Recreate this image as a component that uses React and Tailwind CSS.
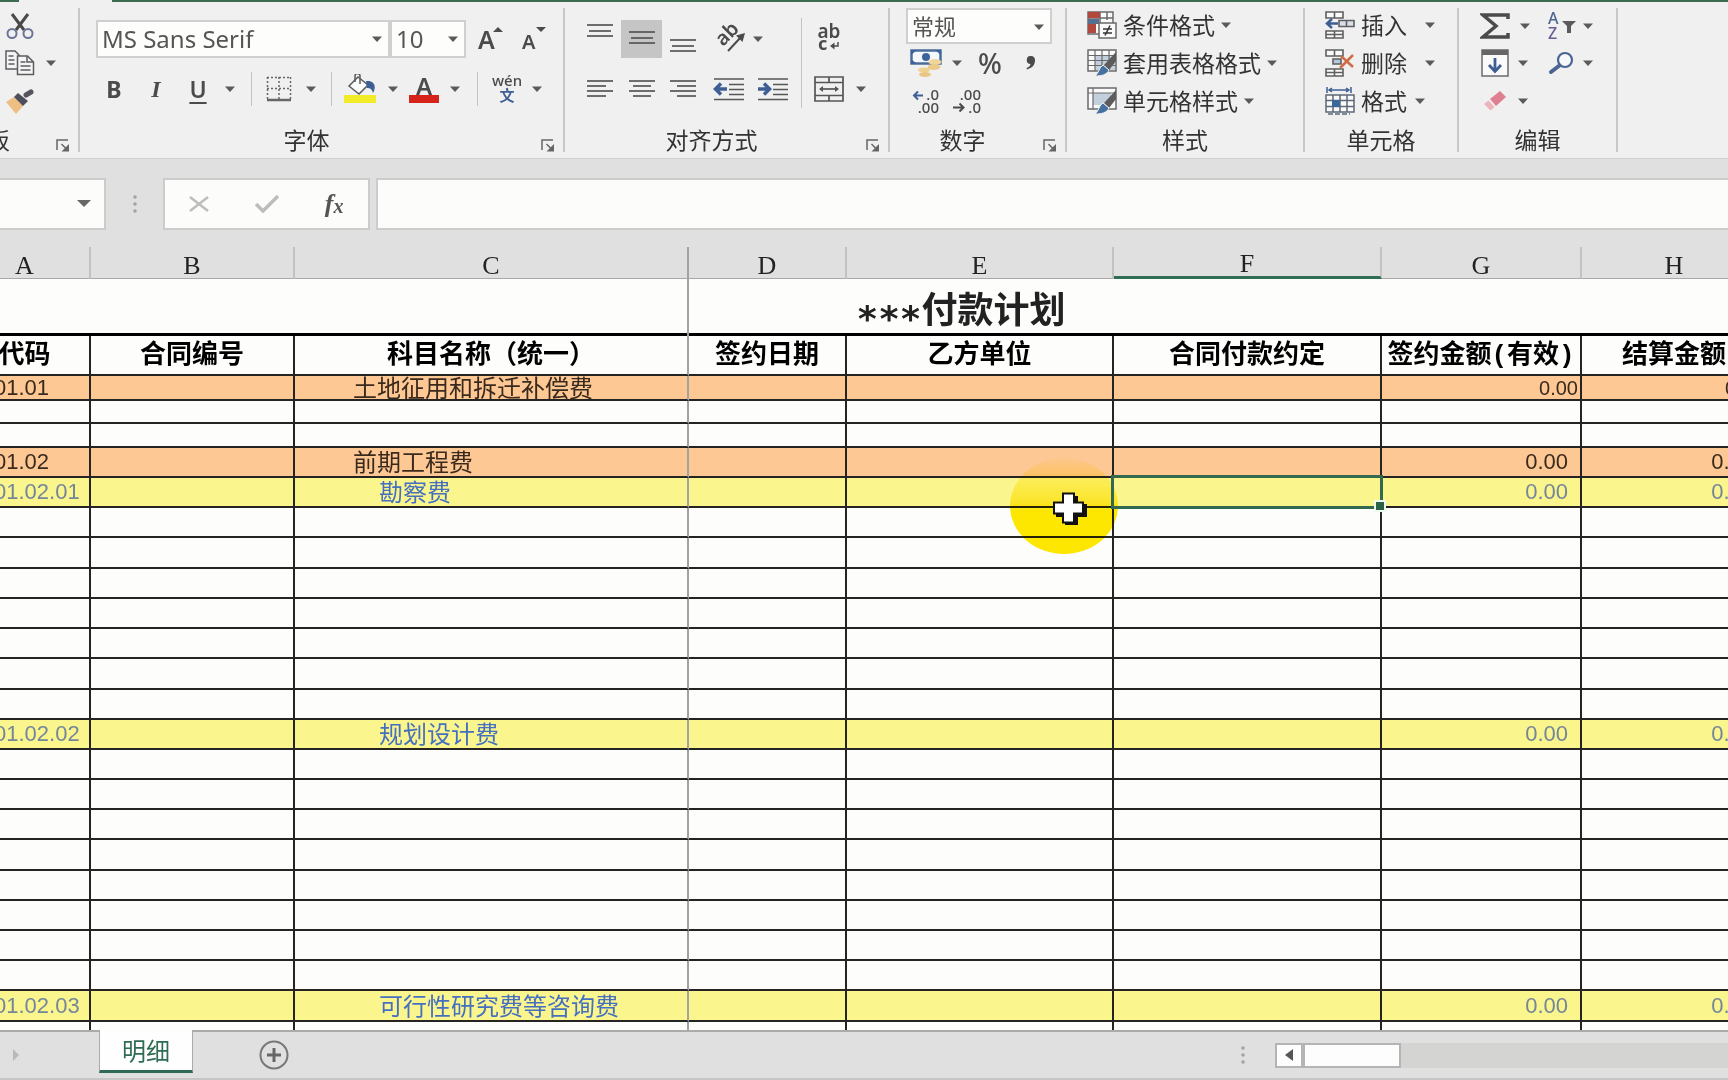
import React from "react";

const INK = "#4b4b4b";
const BLUE = "#3f5f94";

function Caret({ className = "" }) {
  return (
    <svg width="10" height="6" viewBox="0 0 10 6" className={`shrink-0 ${className}`} aria-hidden="true">
      <path d="M0 0.5h10L5 6z" fill="#5a5a5a" />
    </svg>
  );
}

function Btn({ label, className = "", children }) {
  return (
    <button type="button" aria-label={label} className={`flex h-full shrink-0 items-center justify-center ${className}`}>
      {children}
    </button>
  );
}

function Drop({ label, className = "w-[22px]" }) {
  return (
    <Btn label={label} className={className}>
      <Caret />
    </Btn>
  );
}

function Combo({ label, value, className = "" }) {
  return (
    <div className={`relative h-full shrink-0 ${className}`}>
      <select
        aria-label={label}
        defaultValue={value}
        className="h-full w-full appearance-none rounded-none border-2 border-[#cfcfcf] bg-[#fdfefc] pl-1 leading-7 text-[#555]"
      >
        <option>{value}</option>
      </select>
      <Caret className="pointer-events-none absolute top-4 right-2" />
    </div>
  );
}

function Launcher() {
  return (
    <button type="button" aria-label="更多选项" className="flex w-[30px] shrink-0 items-end justify-center">
      <svg width="14" height="13" viewBox="0 0 14 13" fill="none" stroke="#666" aria-hidden="true">
        <path d="M1 11V1h11" strokeWidth="1.5" />
        <path d="M5.500 5l5 5" strokeWidth="1.5" />
        <path d="M13 5v7.500H5.500z" fill="#666" stroke="none" />
      </svg>
    </button>
  );
}

function Group({ name, launcher, className, children }) {
  return (
    <section aria-label={name} className={`flex shrink-0 flex-col border-r-2 border-[#c8c8c8] ${className}`}>
      {children}
      <div className="mt-auto flex h-[25px]">
        <span className="flex-1 text-center text-[23px] leading-[26px] text-[#333]">{name}</span>
        {launcher && <Launcher />}
      </div>
    </section>
  );
}

const Divider = ({ className }) => (
  <div className={`flex h-full shrink-0 justify-center ${className}`}>
    <div className="w-px bg-[#c4c4c4]" />
  </div>
);

/* Horizontal strokes given as [x1, x2, y] */
function Lines({ w = 28, h = 38, rows }) {
  return (
    <svg width={w} height={h} viewBox={`0 0 ${w} ${h}`} stroke="#555" strokeWidth="1.700" aria-hidden="true">
      {rows.map(([a, b, y]) => (
        <path key={y} d={`M${a} ${y}H${b}`} />
      ))}
    </svg>
  );
}

const Scissors = () => (
  <svg width="28" height="27" viewBox="0 0 28 27" fill="none" aria-hidden="true">
    <path d="M6 1l12 16M22 1L10 17" stroke="#4a4a4a" strokeWidth="3" />
    <circle cx="6" cy="20.500" r="4.500" stroke="#6b7596" strokeWidth="2" />
    <circle cx="22" cy="20.500" r="4.500" stroke="#6b7596" strokeWidth="2" />
  </svg>
);

const Copy = () => (
  <svg width="30" height="26" viewBox="0 0 30 26" fill="#f4f4f4" stroke="#5b5b62" strokeWidth="1.500" aria-hidden="true">
    <path d="M1 1h9l4 4v14H1z" />
    <path d="M3.500 6h5M3.500 10h6M3.500 14h6" />
    <path d="M12.500 6h10l6 6v12.500h-16z" />
    <path d="M22 6v6h6M15.500 12h5M15.500 16h10M15.500 20h10" fill="none" />
  </svg>
);

const Brush = () => (
  <svg width="30" height="26" viewBox="0 0 30 26" aria-hidden="true">
    <path d="M1 14l8-5 9 9-7 8z" fill="#edbf83" />
    <path d="M9 9l4-4 10 8-5 5z" fill="#4d4d5c" />
    <path d="M21 7l5-3" stroke="#55555f" strokeWidth="5" strokeLinecap="round" />
  </svg>
);

const GrowFont = ({ down }) => (
  <svg width="26" height="28" viewBox="0 0 26 28" fill={INK} className="overflow-visible" aria-hidden="true">
    <text x="1" y="24" fontFamily="Noto Sans" fontWeight="600" fontSize={down ? 20 : 25}>A</text>
    {down ? <path d="M15 2h10l-5 5z" /> : <path d="M16 7h10l-5-5z" />}
  </svg>
);

const Borders = () => (
  <svg width="26" height="26" viewBox="0 0 26 26" fill="none" stroke="#666" aria-hidden="true">
    <path d="M1 1.500h24M1 12.500h24M1.500 1v22M13 1v22M24.500 1v22" strokeWidth="1.500" strokeDasharray="2 2" />
    <path d="M1 24h24" strokeWidth="2.500" />
  </svg>
);

const Fill = () => (
  <svg width="32" height="30" viewBox="0 0 32 30" aria-hidden="true">
    <path d="M5 12l9-9 10 8-9 9z" fill="#fbfbfb" stroke="#5b5b5b" strokeWidth="1.500" />
    <path d="M11 8V2a2.500 2.500 0 015 0v8" fill="none" stroke="#5b5b5b" strokeWidth="1.500" />
    <path d="M22 7c8-1 11 5 7 12-1-4-3-5-6-5z" fill={BLUE} />
    <rect x="0" y="21" width="32" height="8" fill="#f2ec28" />
  </svg>
);

const FontColor = () => (
  <svg width="32" height="30" viewBox="0 0 32 30" className="overflow-visible" aria-hidden="true">
    <text x="16" y="21" textAnchor="middle" fontFamily="Noto Sans" fontWeight="600" fontSize="24" fill={INK}>A</text>
    <rect x="1" y="21" width="30" height="8" fill="#d6241a" />
  </svg>
);

const Phonetic = () => (
  <svg width="32" height="30" viewBox="0 0 32 30" className="overflow-visible" aria-hidden="true">
    <text x="16" y="12" textAnchor="middle" fontFamily="Noto Sans" fontWeight="500" fontSize="15" fill={INK}>wén</text>
    <text x="16" y="27" textAnchor="middle" fontFamily="Noto Sans CJK SC" fontWeight="700" fontSize="15" fill={BLUE}>文</text>
  </svg>
);

const Orientation = () => (
  <svg width="32" height="30" viewBox="0 0 32 30" className="overflow-visible" aria-hidden="true">
    <text x="0" y="0" transform="translate(9 23) rotate(-45)" fontFamily="Noto Sans" fontWeight="600" fontSize="20" fill={INK}>ab</text>
    <path d="M14 27L27 13" stroke={INK} strokeWidth="2" />
    <path d="M31 9l-9 2.500 6.500 6.500z" fill={INK} />
  </svg>
);

const Wrap = () => (
  <svg width="26" height="30" viewBox="0 0 26 30" className="overflow-visible" aria-hidden="true">
    <text x="13" y="14" textAnchor="middle" fontFamily="Noto Sans" fontWeight="600" fontSize="19" fill={INK}>ab</text>
    <text x="2" y="26" fontFamily="Noto Sans" fontWeight="700" fontSize="18" fill={INK}>c</text>
    <path d="M22 18v4h-5" fill="none" stroke={INK} strokeWidth="1.500" />
    <path d="M14 22l4.500-3.500v7z" fill={INK} />
  </svg>
);

const Indent = ({ right }) => (
  <svg width="32" height="24" viewBox="0 0 32 24" stroke="#555" strokeWidth="1.700" aria-hidden="true">
    <path d="M1 2h30M16 7.500h15M16 12.500h15M16 17.500h15M1 22.500h30" />
    {right ? (
      <path d="M1 12h11M7 6.500l5.500 5.500L7 17.500" stroke={BLUE} strokeWidth="3.500" fill="none" />
    ) : (
      <path d="M14 12H3M8 6.500L2.500 12 8 17.500" stroke={BLUE} strokeWidth="3.500" fill="none" />
    )}
  </svg>
);

const Merge = () => (
  <svg width="30" height="26" viewBox="0 0 30 26" fill="none" stroke="#555" strokeWidth="1.700" aria-hidden="true">
    <path d="M1 1h28v24H1zM1 6.500h28M1 19.500h28M15 1v5M15 20v5" />
    <path d="M6 13h18" />
    <path d="M5 13l4-3v6zM25 13l-4-3v6z" fill="#555" stroke="none" />
  </svg>
);

const Currency = () => (
  <svg width="32" height="30" viewBox="0 0 32 30" aria-hidden="true">
    <rect x="1.500" y="2.500" width="29" height="13" fill="#f4f8fc" stroke="#4a6c9c" strokeWidth="2.500" />
    <circle cx="16" cy="9" r="4" fill="#3d639b" />
    <path d="M1 2h6L1 7zM31 2h-6l6 5zM1 16h6l-6-5z" fill="#3d639b" />
    <ellipse cx="25" cy="14" rx="6.500" ry="3" fill="#f1d69b" />
    <ellipse cx="24" cy="19" rx="6.500" ry="3" fill="#eccb8a" />
    <ellipse cx="14" cy="22" rx="6" ry="2.500" fill="#efd08e" />
    <ellipse cx="15" cy="26.500" rx="6" ry="2.500" fill="#e9c684" />
  </svg>
);

const Decimal = ({ less }) => (
  <svg width="30" height="28" viewBox="0 0 30 28" fontFamily="Noto Sans" fontSize="15" fontWeight="500" fill={INK} className="overflow-visible" aria-hidden="true">
    <text x="29" y="13" textAnchor="end">{less ? ".00" : ".0"}</text>
    <text x="29" y="26" textAnchor="end">{less ? ".0" : ".00"}</text>
    {less ? (
      <path d="M1 20.500h10M7.500 16.500l4 4-4 4" fill="none" stroke={INK} strokeWidth="2" />
    ) : (
      <path d="M13 8.500H4M8 4.500l-4 4 4 4" fill="none" stroke={BLUE} strokeWidth="2" />
    )}
  </svg>
);

const CondFormat = () => (
  <svg width="30" height="28" viewBox="0 0 30 28" fill="none" stroke="#6a6a6a" strokeWidth="1.500" aria-hidden="true">
    <path d="M1 1h25v22H1zM1 7h25M13 1v22M20 1v8" fill="#fafafa" />
    <path d="M1 1h12v6H1zM1 13h8v9H1z" fill="#b2483e" stroke="none" />
    <path d="M1 8h11v5H1z" fill="#56708f" stroke="none" />
    <rect x="12" y="12" width="17" height="15" fill="#fafafa" />
    <path d="M16 18h9M16 22h9M23 14.500l-5 10" stroke="#333" />
  </svg>
);

const TableFormat = ({ cell }) => (
  <svg width="30" height="28" viewBox="0 0 30 28" fill="none" stroke="#6a6a6a" strokeWidth="1.500" aria-hidden="true">
    <path d="M1 1h28v21H1z" fill="#fafafa" />
    <path d={cell ? "M6 6h18v12H6z" : "M8 6h20v15H8z"} fill="#c3cfdd" stroke="none" />
    <path d={cell ? "M1 6h28M6 1v21" : "M1 6.500h28M1 11.500h28M1 16.500h28M8 1v21M15 1v21M22 1v21"} strokeWidth="1.200" />
    <path d="M29 3l-12 13 5 5 7-9z" fill="#5c5c5c" stroke="none" />
    <path d="M16 16l6 5c-2 5-8 6-14 6 4-3 4-9 8-11z" fill="#44719f" stroke="#f2f2f2" strokeWidth="1" />
  </svg>
);

const Grid3 = ({ y }) => <path d={`M1 ${y}h17v6H1zM9.500 ${y}v6`} fill="#fafafa" />;

const InsertCells = () => (
  <svg width="30" height="28" viewBox="0 0 30 28" fill="none" stroke="#5f5f5f" strokeWidth="1.600" aria-hidden="true">
    <Grid3 y={1} />
    <path d="M1 20h17v7H1zM1 23.500h17M9.500 20v7" fill="#fafafa" />
    <path d="M14 9.500h15v6H14zM21.500 9.500v6" fill="#d9dfe8" />
    <path d="M13 12.500H3M7 8l-5 4.500L7 17" stroke={BLUE} strokeWidth="2.500" />
  </svg>
);

const DeleteCells = () => (
  <svg width="30" height="28" viewBox="0 0 30 28" fill="none" stroke="#5f5f5f" strokeWidth="1.600" aria-hidden="true">
    <Grid3 y={1} />
    <path d="M1 20h17v7H1zM1 23.500h17M9.500 20v7" fill="#fafafa" />
    <path d="M8 10h8v5H8z" fill="#b9c7da" />
    <path d="M16 7l12 11M28 6L15 19" stroke="#d06c45" strokeWidth="2.500" />
  </svg>
);

const FormatCells = () => (
  <svg width="30" height="28" viewBox="0 0 30 28" fill="none" stroke="#5f6878" strokeWidth="1.500" aria-hidden="true">
    <path d="M2 0v6M26 0v6M4 3h20M7 1L4 3l3 2M21 1l3 2-3 2" stroke={BLUE} />
    <path d="M1 8h28v17H1zM1 13.500h28M1 19.500h28M8 8v17M15 8v17M22 8v17" fill="#fafafa" />
    <rect x="7" y="13" width="8" height="7" fill="#3c689c" stroke="none" />
    <path d="M3 27h22" strokeDasharray="5 2" />
  </svg>
);

const Sigma = () => (
  <svg width="30" height="26" viewBox="0 0 30 26" fill="none" stroke="#4b4b4b" aria-hidden="true">
    <path d="M28 6V2H3l13 11L3 24h25v-4" strokeWidth="3.500" />
  </svg>
);

const SortFilter = () => (
  <svg width="30" height="28" viewBox="0 0 30 28" fontFamily="Noto Sans" fontSize="16" fontWeight="500" className="overflow-visible" aria-hidden="true">
    <text x="1" y="12" fill="#4e6794">A</text>
    <text x="1" y="27" fill="#6d5a95">Z</text>
    <path d="M15 9h14l-5 5v7h-4v-7z" fill="#5a5a5a" />
  </svg>
);

const FillDown = () => (
  <svg width="28" height="28" viewBox="0 0 28 28" aria-hidden="true">
    <rect x="1" y="1" width="26" height="26" fill="#fafafa" stroke="#6a6a6a" strokeWidth="1.500" />
    <rect x="1" y="1" width="26" height="5" fill="#666" />
    <path d="M14 9v13M8 16l6 6.500L20 16" fill="none" stroke={BLUE} strokeWidth="2.800" />
  </svg>
);

const Find = () => (
  <svg width="28" height="24" viewBox="0 0 28 24" fill="none" aria-hidden="true">
    <circle cx="17" cy="9" r="7" stroke="#4a6592" strokeWidth="2.200" fill="#f6f8fb" />
    <path d="M11.500 14.500L3 21" stroke="#4a6592" strokeWidth="4" strokeLinecap="round" />
  </svg>
);

const Eraser = () => (
  <svg width="26" height="22" viewBox="0 0 26 22" aria-hidden="true">
    <path d="M8 9L18 1l6 6-10 9z" fill="#df7f8f" />
    <path d="M6.500 10.500l6 6.500-4 3.500L2 14z" fill="#eeb3bb" />
  </svg>
);

const Dots = () => (
  <svg width="4" height="18" viewBox="0 0 4 18" fill="#a3a3a3" aria-hidden="true">
    <circle cx="2" cy="2" r="1.800" />
    <circle cx="2" cy="9" r="1.800" />
    <circle cx="2" cy="16" r="1.800" />
  </svg>
);

function Command({ icon, text, gap = "gap-1.5" }) {
  return (
    <button type="button" className={`flex h-[38px] items-center text-[23px] leading-none whitespace-nowrap text-[#333] ${gap}`}>
      <span className="flex items-center gap-1.5">
        {icon}
        {text}
      </span>
      <Caret />
    </button>
  );
}

function Ribbon() {
  return (
    <header className="flex h-[157px] shrink-0 overflow-hidden border-b border-[#d2d2d2] bg-[#eff0ef] py-1.5">
      <section aria-label="剪贴板" className="flex w-20 shrink-0 flex-col border-r-2 border-[#c8c8c8]">
        <div className="flex h-9"><Btn label="剪切" className="w-10"><Scissors /></Btn></div>
        <div className="flex h-[38px]"><Btn label="复制" className="w-10"><Copy /></Btn><Drop label="复制选项" /></div>
        <div className="flex h-[38px]"><Btn label="格式刷" className="w-10"><Brush /></Btn></div>
        <div className="mt-auto flex h-[25px] justify-between">
          <span className="flex w-2.5 justify-end text-[23px] leading-[26px] whitespace-nowrap text-[#333]">剪贴板</span>
          <Launcher />
        </div>
      </section>

      <Group name="字体" launcher className="w-[485px]">
        <div className="mt-3 flex h-[38px] pl-4">
          <Combo label="字体" value="MS Sans Serif" className="w-[294px] text-[24px]" />
          <Combo label="字号" value="10" className="w-[76px] text-[24px]" />
          <Btn label="增大字号" className="w-12"><GrowFont /></Btn>
          <Btn label="减小字号" className="w-10"><GrowFont down /></Btn>
        </div>
        <div className="mt-3.5 flex h-[34px] pl-[13px] text-[23px] text-[#4b4b4b]">
          <Btn label="加粗" className="w-[42px] font-bold">B</Btn>
          <Btn label="倾斜" className="w-[42px] font-[Liberation_Serif] text-[24px] font-bold italic">I</Btn>
          <Btn label="下划线" className="w-[42px] font-semibold underline underline-offset-4">U</Btn>
          <Drop label="下划线选项" />
          <Divider className="w-5" />
          <Btn label="边框" className="w-9"><Borders /></Btn>
          <Drop label="边框选项" className="w-7" />
          <Divider className="w-3" />
          <Btn label="填充颜色" className="w-[46px]"><Fill /></Btn>
          <Drop label="填充颜色选项" className="w-5" />
          <Btn label="字体颜色" className="w-[42px]"><FontColor /></Btn>
          <Drop label="字体颜色选项" className="w-5" />
          <Divider className="w-6" />
          <Btn label="拼音" className="w-9"><Phonetic /></Btn>
          <Drop label="拼音选项" className="w-6" />
        </div>
      </Group>

      <Group name="对齐方式" launcher className="w-[325px]">
        <div className="flex">
          <div className="w-[236px] pt-3 pl-3.5">
            <div className="flex h-[38px]">
              <Btn label="顶端对齐" className="w-[42px]"><Lines rows={[[1, 27, 5], [3, 25, 11], [1, 27, 16]]} /></Btn>
              <Btn label="垂直居中" className="w-[41px] bg-[#c5c5c5]"><Lines rows={[[1, 27, 12], [3, 25, 18], [1, 27, 23]]} /></Btn>
              <Btn label="底端对齐" className="w-[41px]"><Lines rows={[[1, 27, 20], [3, 25, 26], [1, 27, 31]]} /></Btn>
              <Btn label="方向" className="w-[44px] pl-2.5"><Orientation /></Btn>
              <Drop label="方向选项" />
            </div>
            <div className="mt-3.5 flex h-[34px]">
              <Btn label="左对齐" className="w-[42px]"><Lines h={34} rows={[[1, 27, 9], [1, 20, 14], [1, 27, 19], [1, 20, 24]]} /></Btn>
              <Btn label="居中" className="w-[41px]"><Lines h={34} rows={[[1, 27, 9], [5, 23, 14], [1, 27, 19], [5, 23, 24]]} /></Btn>
              <Btn label="右对齐" className="w-[41px]"><Lines h={34} rows={[[1, 27, 9], [8, 27, 14], [1, 27, 19], [8, 27, 24]]} /></Btn>
              <Btn label="减少缩进量" className="w-[52px]"><Indent /></Btn>
              <Btn label="增加缩进量" className="w-[36px]"><Indent right /></Btn>
            </div>
          </div>
          <div className="mt-2.5 h-[90px] w-px bg-[#c4c4c4]" />
          <div className="pt-3 pl-2">
            <div className="flex h-[38px]"><Btn label="自动换行" className="w-[38px]"><Wrap /></Btn></div>
            <div className="mt-3.5 flex h-[34px]">
              <Btn label="合并后居中" className="w-[38px]"><Merge /></Btn>
              <Drop label="合并选项" className="w-[26px]" />
            </div>
          </div>
        </div>
      </Group>

      <Group name="数字" launcher className="w-[177px] text-[#4b4b4b]">
        <div className="h-9 pl-4"><Combo label="数字格式" value="常规" className="w-[146px] text-[22px]" /></div>
        <div className="flex h-[38px] pl-4">
          <Btn label="会计数字格式" className="w-10"><Currency /></Btn>
          <Drop label="会计选项" />
          <Btn label="百分比样式" className="w-11 text-[28px] font-medium">%</Btn>
          <Btn label="千位分隔样式" className="w-[38px]">
            <svg width="12" height="14" viewBox="0 0 12 14" fill="#4b4b4b" aria-hidden="true">
              <path d="M6 0a4 4 0 014 4.500C10 9 7 12 2 13.500l-.500-1.500C4 11 5.500 9.500 5.500 8A4 4 0 016 0z" />
            </svg>
          </Btn>
        </div>
        <div className="flex h-[38px] pl-4">
          <Btn label="增加小数位数" className="w-[38px]"><Decimal /></Btn>
          <Btn label="减少小数位数" className="w-[46px]"><Decimal less /></Btn>
        </div>
      </Group>

      <Group name="样式" className="w-[238px]">
        <div className="-mt-0.5 flex flex-col items-start pl-5">
          <Command icon={<CondFormat />} text="条件格式" />
          <Command icon={<TableFormat />} text="套用表格格式" />
          <Command icon={<TableFormat cell />} text="单元格样式" />
        </div>
      </Group>

      <Group name="单元格" className="w-[154px]">
        <div className="-mt-0.5 flex flex-col items-start pl-5">
          <Command icon={<InsertCells />} text="插入" gap="gap-[18px]" />
          <Command icon={<DeleteCells />} text="删除" gap="gap-[18px]" />
          <Command icon={<FormatCells />} text="格式" gap="gap-2" />
        </div>
      </Group>

      <Group name="编辑" className="w-[159px]">
        <div className="flex h-9 pl-5">
          <Btn label="自动求和" className="w-8"><Sigma /></Btn>
          <Drop label="求和选项" className="w-7" />
          <Btn label="排序和筛选" className="ml-2 w-[30px]"><SortFilter /></Btn>
          <Drop label="排序选项" />
        </div>
        <div className="flex h-[38px] pl-5">
          <Btn label="填充" className="w-8"><FillDown /></Btn>
          <Drop label="填充选项" className="w-6" />
          <Btn label="查找和选择" className="ml-3 w-[30px]"><Find /></Btn>
          <Drop label="查找选项" />
        </div>
        <div className="flex h-[38px] pl-5">
          <Btn label="清除" className="w-8"><Eraser /></Btn>
          <Drop label="清除选项" className="w-6" />
        </div>
      </Group>
    </header>
  );
}

function FormulaBar() {
  return (
    <div className="flex shrink-0 bg-[#e0e0e0] pt-[19px] pb-[17px]">
      <div className="relative h-[52px] w-[106px]">
        <input aria-label="名称框" className="h-full w-full border-2 border-l-0 border-[#cccccc] bg-[#fcfdfb]" />
        <svg width="14" height="7" viewBox="0 0 14 7" className="pointer-events-none absolute top-[22px] right-[15px]" aria-hidden="true">
          <path d="M0 0h14L7 7z" fill="#666" />
        </svg>
      </div>
      <div className="flex w-[57px] items-center justify-center"><Dots /></div>
      <div className="flex h-[52px] w-[207px] border-2 border-[#cccccc] bg-[#fcfdfb]">
        <Btn label="取消" className="flex-1">
          <svg width="20" height="16" viewBox="0 0 20 16" stroke="#bdbdbd" strokeWidth="2.500" aria-hidden="true"><path d="M1 1l18 14M19 1L1 15" /></svg>
        </Btn>
        <Btn label="输入" className="flex-1">
          <svg width="24" height="18" viewBox="0 0 24 18" fill="none" stroke="#bdbdbd" strokeWidth="3.500" aria-hidden="true"><path d="M1 9l7 7L23 1" /></svg>
        </Btn>
        <Btn label="插入函数" className="flex-1 font-[Liberation_Serif] text-[26px] leading-none font-bold text-[#555] italic">
          f<span className="pt-1 text-[20px]">x</span>
        </Btn>
      </div>
      <input aria-label="编辑栏" className="ml-1.5 h-[52px] min-w-0 flex-1 border-y-2 border-l-2 border-[#cccccc] bg-[#fcfdfb] px-2 text-xl" />
    </div>
  );
}

const LETTERS = ["A", "B", "C", "D", "E", "F", "G", "H", ""];
const HEADINGS = ["代码", "合同编号", "科目名称（统一）", "签约日期", "乙方单位", "合同付款约定", "签约金额(有效)", "结算金额", ""];

const blank = { h: "h-[30px]" };
const blankTall = { h: "h-[31px]" };
const ORANGE = "bg-[#fdc893] text-[#3a2a1e]";
const YELLOW = "bg-[#fbf58e] text-[#74879a]";

const ROWS = [
  { h: "h-[25px]", tone: ORANGE, code: "01.01", name: "土地征用和拆迁补偿费", amount: "0.00", tight: true },
  { h: "h-[23px]" },
  { h: "h-[24px]" },
  { h: "h-[30px]", tone: ORANGE, code: "01.02", name: "前期工程费", amount: "0.00" },
  { h: "h-[30px]", tone: YELLOW, code: "01.02.01", name: "勘察费", amount: "0.00", child: true, active: true },
  blank, blankTall, blank, blank, blank, blankTall,
  blank,
  { h: "h-[30px]", tone: YELLOW, code: "01.02.02", name: "规划设计费", amount: "0.00", child: true },
  blank, blank, blank, blankTall, blank, blank, blank, blank,
  { h: "h-[31px]", tone: YELLOW, code: "01.02.03", name: "可行性研究费等咨询费", amount: "0.00", child: true },
  blank,
];

function Cursor() {
  return (
    <>
      <div className="pointer-events-none absolute -top-5 right-[-6px] z-10 h-24 w-[108px] rounded-[50%] bg-linear-to-b from-[#ffe900]/5 via-[#ffe900]/70 via-45% to-[#ffe900] to-55% mix-blend-multiply" />
      <svg width="36" height="34" viewBox="0 0 36 34" className="pointer-events-none absolute top-3.5 right-6 z-20" aria-hidden="true">
        <path d="M13 4h13v8h9v13h-9v8H13v-8H4V12h9z" fill="#111" />
        <path d="M11 1.500h11v9h9v11h-9v9H11v-9H2v-11h9z" fill="#fff" stroke="#111" strokeWidth="2" />
      </svg>
    </>
  );
}

function Sheet() {
  const rule = "border-b-2 border-r-2 border-[#262422]";
  const frozen = "border-b-2 border-r-2 border-[#262422] border-r-[#a2a2a2]";
  return (
    <main className="min-h-0 flex-1 overflow-hidden bg-[#fdfdfc]">
      <table className="-ml-10 w-[2002px] table-fixed border-separate border-spacing-0">
        <colgroup>
          <col className="w-[131px]" />
          <col className="w-[204px]" />
          <col className="w-[394px]" />
          <col className="w-[158px]" />
          <col className="w-[267px]" />
          <col className="w-[268px]" />
          <col className="w-[200px]" />
          <col className="w-[186px]" />
          <col className="w-[194px]" />
        </colgroup>
        <thead>
          <tr>
            {LETTERS.map((l, i) => (
              <th
                key={i}
                scope="col"
                className={`h-8 border-r-2 bg-[#e0e0e0] p-0 align-bottom font-[Liberation_Serif] text-[26px] leading-6 font-normal text-[#222] ${
                  l === "F" ? "border-b-3 border-r-[#c2c2c2] border-b-[#2f6e53]" : l === "C" ? "border-b border-r-[#a2a2a2] border-b-[#a8a8a8]" : "border-b border-r-[#c2c2c2] border-b-[#a8a8a8]"
                }`}
              >
                {l}
              </th>
            ))}
          </tr>
        </thead>
        <tbody>
          <tr>
            <td colSpan={9} className="h-[57px] border-b-3 border-black p-0">
              <div className="flex">
                <div className="-mt-4 -mb-4 w-[729px] shrink-0 border-r-2 border-[#a2a2a2]" />
                <h1 className="-ml-[729px] h-[54px] flex-1 pt-1 text-center text-[36px] leading-[54px] font-bold text-[#222]">
                  <span className="align-sub font-['DejaVu_Sans_Mono'] leading-none">***</span>付款计划
                </h1>
              </div>
            </td>
          </tr>
          <tr>
            {HEADINGS.map((t, i) => (
              <td key={i} className={`h-10 p-0 pt-0.5 text-center font-['Liberation_Mono','Noto_Sans_CJK_SC',monospace] text-[26px] leading-9 font-bold whitespace-nowrap text-black ${i === 2 ? frozen : rule}`}>
                {t}
              </td>
            ))}
          </tr>
          {ROWS.map((r, n) => (
            <tr key={n} className={r.tone}>
              <td className={`${r.h} py-0 pr-0 pl-[34px] font-[Liberation_Sans] text-[22px] leading-[22px] ${rule}`}>{r.code}</td>
              <td className={`p-0 ${rule}`} />
              <td className={`py-0 pr-0 text-[24px] leading-[22px] ${r.child ? "pl-[84px] text-[#4570c0]" : "pl-[58px]"} ${frozen}`}>{r.name}</td>
              <td className={`p-0 ${rule}`} />
              <td className={`relative p-0 ${rule}`}>{r.active && <Cursor />}</td>
              <td className={`relative p-0 ${rule}`}>
                {r.active && (
                  <div className="absolute -top-[3px] -right-[3px] -bottom-[3px] -left-[3px] z-10 border-3 border-[#33694f]">
                    <div className="absolute -right-[6px] -bottom-[6px] size-[12px] border-2 border-[#eefaf0] bg-[#2b6349]" />
                  </div>
                )}
              </td>
              <td className={`py-0 pl-0 text-right font-[Liberation_Sans] leading-[22px] ${r.tight ? "pr-0.5 text-[20px]" : "pr-3 text-[22px]"} ${rule}`}>{r.amount}</td>
              <td className={`py-0 pl-0 text-right font-[Liberation_Sans] leading-[22px] ${r.tight ? "pr-0.5 text-[20px]" : "pr-3 text-[22px]"} ${rule}`}>{r.amount}</td>
              <td className={`p-0 ${rule}`} />
            </tr>
          ))}
        </tbody>
      </table>
    </main>
  );
}

function SheetTabs() {
  return (
    <footer className="flex h-[50px] shrink-0 items-start border-b-2 border-[#c6c6c6] bg-[#e0e0e0]">
      <div className="flex h-full w-[99px] shrink-0 items-center border-t-2 border-[#ababab] pl-3">
        <button type="button" aria-label="下一个工作表">
          <svg width="8" height="12" viewBox="0 0 8 12" aria-hidden="true"><path d="M1 0l6 6-6 6z" fill="#b9b9b9" /></svg>
        </button>
      </div>
      <button type="button" className="h-[43px] w-[94px] shrink-0 border-x border-b-3 border-x-[#ababab] border-b-[#2f6b54] bg-[#fdfefd] pt-0.5 text-[24px] leading-none text-[#2f6b54]">
        明细
      </button>
      <div className="flex h-full min-w-0 flex-1 items-center border-t-2 border-[#ababab]">
        <button type="button" aria-label="新建工作表" className="ml-[65px]">
          <svg width="32" height="30" viewBox="0 0 32 30" fill="none" stroke="#777" aria-hidden="true">
            <circle cx="16" cy="15" r="13.500" strokeWidth="2" />
            <path d="M16 8v14M9 15h14" strokeWidth="3" stroke="#666" />
          </svg>
        </button>
        <div className="ml-auto flex w-[487px] shrink-0 items-center">
          <Dots />
          <div className="ml-[30px] flex h-[25px] flex-1 bg-[#d4d5d3]">
            <button type="button" aria-label="向左滚动" className="flex w-7 items-center justify-center border-2 border-[#b4b4b4] bg-[#fdfdfd]">
              <svg width="8" height="12" viewBox="0 0 8 12" aria-hidden="true"><path d="M8 0L0 6l8 6z" fill="#555" /></svg>
            </button>
            <div className="w-[98px] border-2 border-[#b4b4b4] bg-[#fdfdfd]" />
          </div>
        </div>
      </div>
    </footer>
  );
}

export default function App() {
  return (
    <div className="flex h-screen flex-col overflow-hidden bg-[#e0e0e0] font-['Noto_Sans','Noto_Sans_CJK_SC',sans-serif]">
      <div className="flex h-0.5 shrink-0 bg-[#3d6b52]">
        <div className="ml-[19px] w-[93px] bg-[#eff0ef]" />
      </div>
      <Ribbon />
      <FormulaBar />
      <Sheet />
      <SheetTabs />
    </div>
  );
}
